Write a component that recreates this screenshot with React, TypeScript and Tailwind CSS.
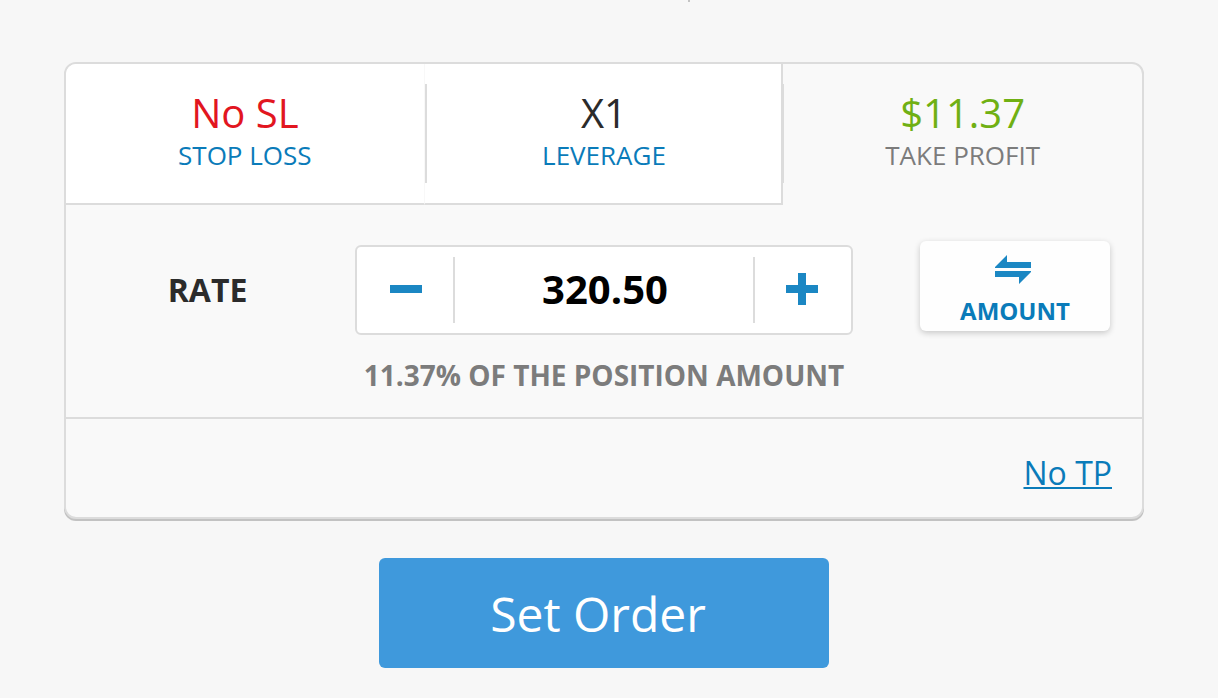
import { useState } from "react";

type Tab = { id: string; value: string; label: string; tone: string };

const tabs: Tab[] = [
  { id: "sl", value: "No SL", label: "STOP LOSS", tone: "text-[#e2161f]" },
  { id: "lev", value: "X1", label: "LEVERAGE", tone: "text-[#2b2b2b]" },
  { id: "tp", value: "$11.37", label: "TAKE PROFIT", tone: "text-[#70b013]" },
];

const tabFrames = [
  "rounded-tl-[10px] border-r border-b-2 border-r-[#f8f8f8] border-b-[#dcdcdc] bg-white text-[#0a7bb9]",
  "border-r-2 border-b-2 border-[#dcdcdc] bg-white pl-0.5 text-[#0a7bb9]",
  "text-[#7c7c7c]",
];

const dividers = ["hidden", "left-0", "-left-px"];

function Tabs() {
  return (
    <div role="tablist" className="grid grid-cols-3">
      {tabs.map((tab, i) => (
        <button
          key={tab.id}
          type="button"
          role="tab"
          aria-selected={i === 2}
          className={`relative flex h-[141px] flex-col items-center pt-[22px] ${tabFrames[i]}`}
        >
          <span className={`absolute top-5 h-[99px] w-0.5 bg-[#dcdcdc] ${dividers[i]}`} />
          <span className={`text-[40px] leading-[54px] ${tab.tone}`}>{tab.value}</span>
          <span className="text-[26px] leading-[30px]">{tab.label}</span>
        </button>
      ))}
    </div>
  );
}

function Stepper({ value, onChange }: { value: string; onChange: (v: string) => void }) {
  const step = (by: number) => onChange((Number(value) + by).toFixed(2));
  return (
    <div className="mt-1 flex h-[90px] items-center rounded-md border-2 border-[#dcdcdc] bg-white">
      <button type="button" aria-label="Decrease rate" onClick={() => step(-0.5)} className="flex h-full w-24 items-center justify-center pb-0.5 pl-0.5">
        <svg width="32" height="32" viewBox="0 0 32 32" fill="#1b87c3">
          <path d="M0 12h32v8H0z" />
        </svg>
      </button>
      <input
        id="rate"
        value={value}
        onChange={(e) => onChange(e.target.value)}
        className="h-[66px] min-w-0 flex-1 border-x-2 border-[#dcdcdc] pb-1 pl-0.5 text-center text-[40px] font-bold text-black outline-none"
      />
      <button type="button" aria-label="Increase rate" onClick={() => step(0.5)} className="flex h-full w-24 items-center justify-center pr-0.5 pb-0.5">
        <svg width="32" height="32" viewBox="0 0 32 32" fill="#1b87c3">
          <path d="M12 0h8v12h12v8H20v12h-8V20H0v-8h12z" />
        </svg>
      </button>
    </div>
  );
}

export default function App() {
  const [rate, setRate] = useState("320.50");
  return (
    <main className="relative min-h-screen bg-[#f7f7f7] pt-[62px] pr-[74px] pb-[30px] pl-16 font-['Open_Sans',sans-serif]">
      <span aria-hidden="true" className="absolute top-0 left-[688px] size-0.5 bg-[#c4c4c4]" />
      <section className="rounded-xl border-2 border-[#dcdcdc] bg-[#f9f9f9] shadow-[0_2px_0_#c2c2c2]">
        <Tabs />
        <div className="border-b-2 border-[#dcdcdc] pt-9 pb-[22px]">
          <div className="grid grid-cols-[1fr_498px_1fr] items-start">
            <label htmlFor="rate" className="mt-1 pr-1.5 text-center text-[32px] leading-[90px] font-bold text-[#2b2b2b]">
              RATE
            </label>
            <Stepper value={rate} onChange={setRate} />
            <button
              type="button"
              className="mr-8 flex h-[90px] w-[190px] flex-col items-center justify-self-end rounded-md bg-[#fefefe] pt-3.5 text-[24px] leading-8 font-bold text-[#0a7bb9] shadow-[0_2px_6px_rgba(0,0,0,0.2)]"
            >
              <svg width="36" height="29" viewBox="0 0 36 29" fill="#1b87c3" className="mr-1 mb-[11px] shrink-0">
                <path d="M0 13V12L12 0v7h24v6zM0 16h36v1L24 29v-7H0z" />
              </svg>
              AMOUNT
            </button>
          </div>
          <p className="mt-5 text-center text-[28px] leading-10 font-bold text-[#7c7c7c]">
            11.37% OF THE POSITION AMOUNT
          </p>
        </div>
        <div className="flex h-[98px] justify-end pt-[30px] pr-[30px]">
          <a href="#no-tp" className="text-[32px] leading-[48px] text-[#0a7bb9] underline decoration-2 underline-offset-2">
            No TP
          </a>
        </div>
      </section>
      <button
        type="button"
        className="mx-auto mt-[39px] block h-[110px] w-[450px] rounded-md bg-[#3f99dc] pt-0.5 pr-3 text-[48px] text-white"
      >
        Set Order
      </button>
    </main>
  );
}
